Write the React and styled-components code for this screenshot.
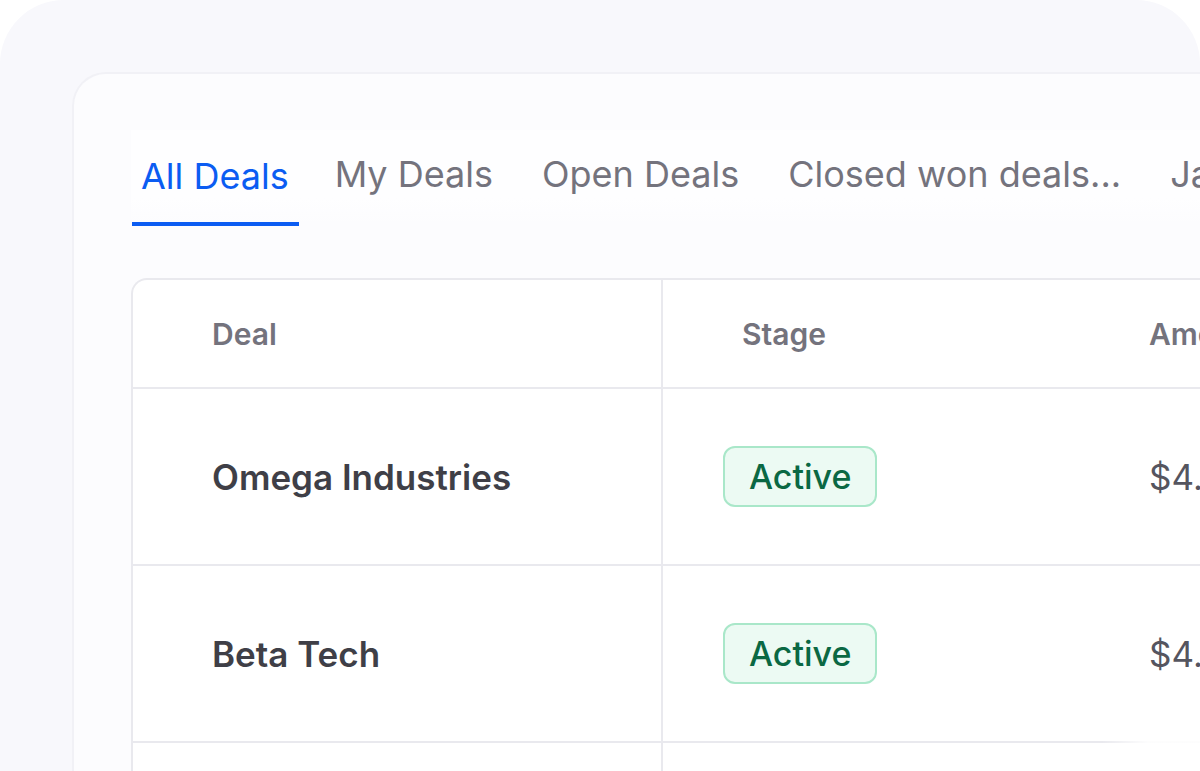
import React from 'react'
import styled, { createGlobalStyle } from 'styled-components';

const GlobalStyle = createGlobalStyle`
  html, body {
    margin: 0;
    padding: 0;
    background: #ffffff;
    overflow: hidden;
  }
  body {
    font-family: Inter, "Noto Sans", "Liberation Sans", sans-serif;
    -webkit-font-smoothing: antialiased;
  }
`

const Frame = styled.div`
  position: relative;
  height: 100vh;
  box-sizing: border-box;
  padding: 72px 0 0 72px;
  background: #f8f8fc;
  border-radius: 64px 64px 0 0;
  overflow: hidden;

  &::after {
    content: '';
    position: absolute;
    right: -60px;
    bottom: -60px;
    width: 160px;
    height: 160px;
    border-radius: 50%;
    background: radial-gradient(circle, rgba(255,255,255,0.9) 30%, rgba(255,255,255,0) 70%);
    pointer-events: none;
  }
`

const Panel = styled.div`
  width: 1400px;
  min-height: 800px;
  box-sizing: border-box;
  padding: 56px 0 0 57px;
  background: #fcfcfe;
  border: 2px solid #f1f1f6;
  border-right: none;
  border-bottom: none;
  border-radius: 34px 0 0 0;
`

const TabBar = styled.div`
  display: flex;
  align-items: stretch;
  gap: 27px;
  height: 96px;
  background: linear-gradient(#fefeff, #fefeff 70%, rgba(254,254,255,0));
`

const Tab = styled.div`
  display: flex;
  align-items: center;
  box-sizing: border-box;
  padding: ${p => (p.$active ? '0 10px 0 9px' : '0 11px 9px')};
  margin: ${p => (p.$active ? '0 -2px 0 1px' : '0')};
  font-size: 36px;
  font-weight: 400;
  white-space: nowrap;
  color: ${p => (p.$active ? '#0b5cf2' : '#74737d')};
  border-bottom: ${p => (p.$active ? '4px solid #0b5cf2' : 'none')};
`

const Table = styled.div`
  margin-top: 52px;
  display: grid;
  grid-template-columns: 530px 407px 1fr;
  border: 2px solid #e9e9ee;
  border-right: none;
  border-bottom: none;
  border-radius: 16px 0 0 0;
  background: #ffffff;
`

const HeadCell = styled.div`
  display: flex;
  align-items: center;
  height: 107px;
  padding-left: 79px;
  border-bottom: 2px solid #e9e9ee;
  border-right: ${p => (p.$divider ? '2px solid #e9e9ee' : 'none')};
  font-size: 30px;
  font-weight: 600;
  color: #74737d;
  white-space: nowrap;
`

const Cell = styled.div`
  display: flex;
  align-items: center;
  height: 175px;
  padding-left: ${p => p.$pad || 79}px;
  border-bottom: 2px solid #e9e9ee;
  border-right: ${p => (p.$divider ? '2px solid #e9e9ee' : 'none')};
  white-space: nowrap;
`

const DealName = styled.span`
  font-size: 35px;
  font-weight: 600;
  color: #3f3f47;
`

const Badge = styled.span`
  display: inline-flex;
  align-items: center;
  height: 61px;
  box-sizing: border-box;
  padding: 0 24px;
  border: 2px solid #a9e7c9;
  border-radius: 12px;
  background: #ecfaf3;
  color: #0a6843;
  font-size: 34px;
  font-weight: 500;
`

const Amount = styled.span`
  font-size: 35px;
  font-weight: 400;
  color: #55555f;
`

const tabs = ['All Deals', 'My Deals', 'Open Deals', 'Closed won deals...', 'January deals']

const deals = [
  { name: 'Omega Industries', stage: 'Active', amount: '$4.5M' },
  { name: 'Beta Tech', stage: 'Active', amount: '$4.2M' },
  { name: 'Gamma Labs', stage: 'Active', amount: '$3.8M' },
]

const App = () => {
  return (
    <>
      <GlobalStyle />
      <Frame>
        <Panel>
          <TabBar>
            {tabs.map((t, i) => (
              <Tab key={t} $active={i === 0}>{t}</Tab>
            ))}
          </TabBar>
          <Table>
            <HeadCell $divider>Deal</HeadCell>
            <HeadCell>Stage</HeadCell>
            <HeadCell>Amount</HeadCell>
            {deals.map(d => (
              <React.Fragment key={d.name}>
                <Cell $divider><DealName>{d.name}</DealName></Cell>
                <Cell $pad={60}><Badge>{d.stage}</Badge></Cell>
                <Cell><Amount>{d.amount}</Amount></Cell>
              </React.Fragment>
            ))}
          </Table>
        </Panel>
      </Frame>
    </>
  )
}

export default App
